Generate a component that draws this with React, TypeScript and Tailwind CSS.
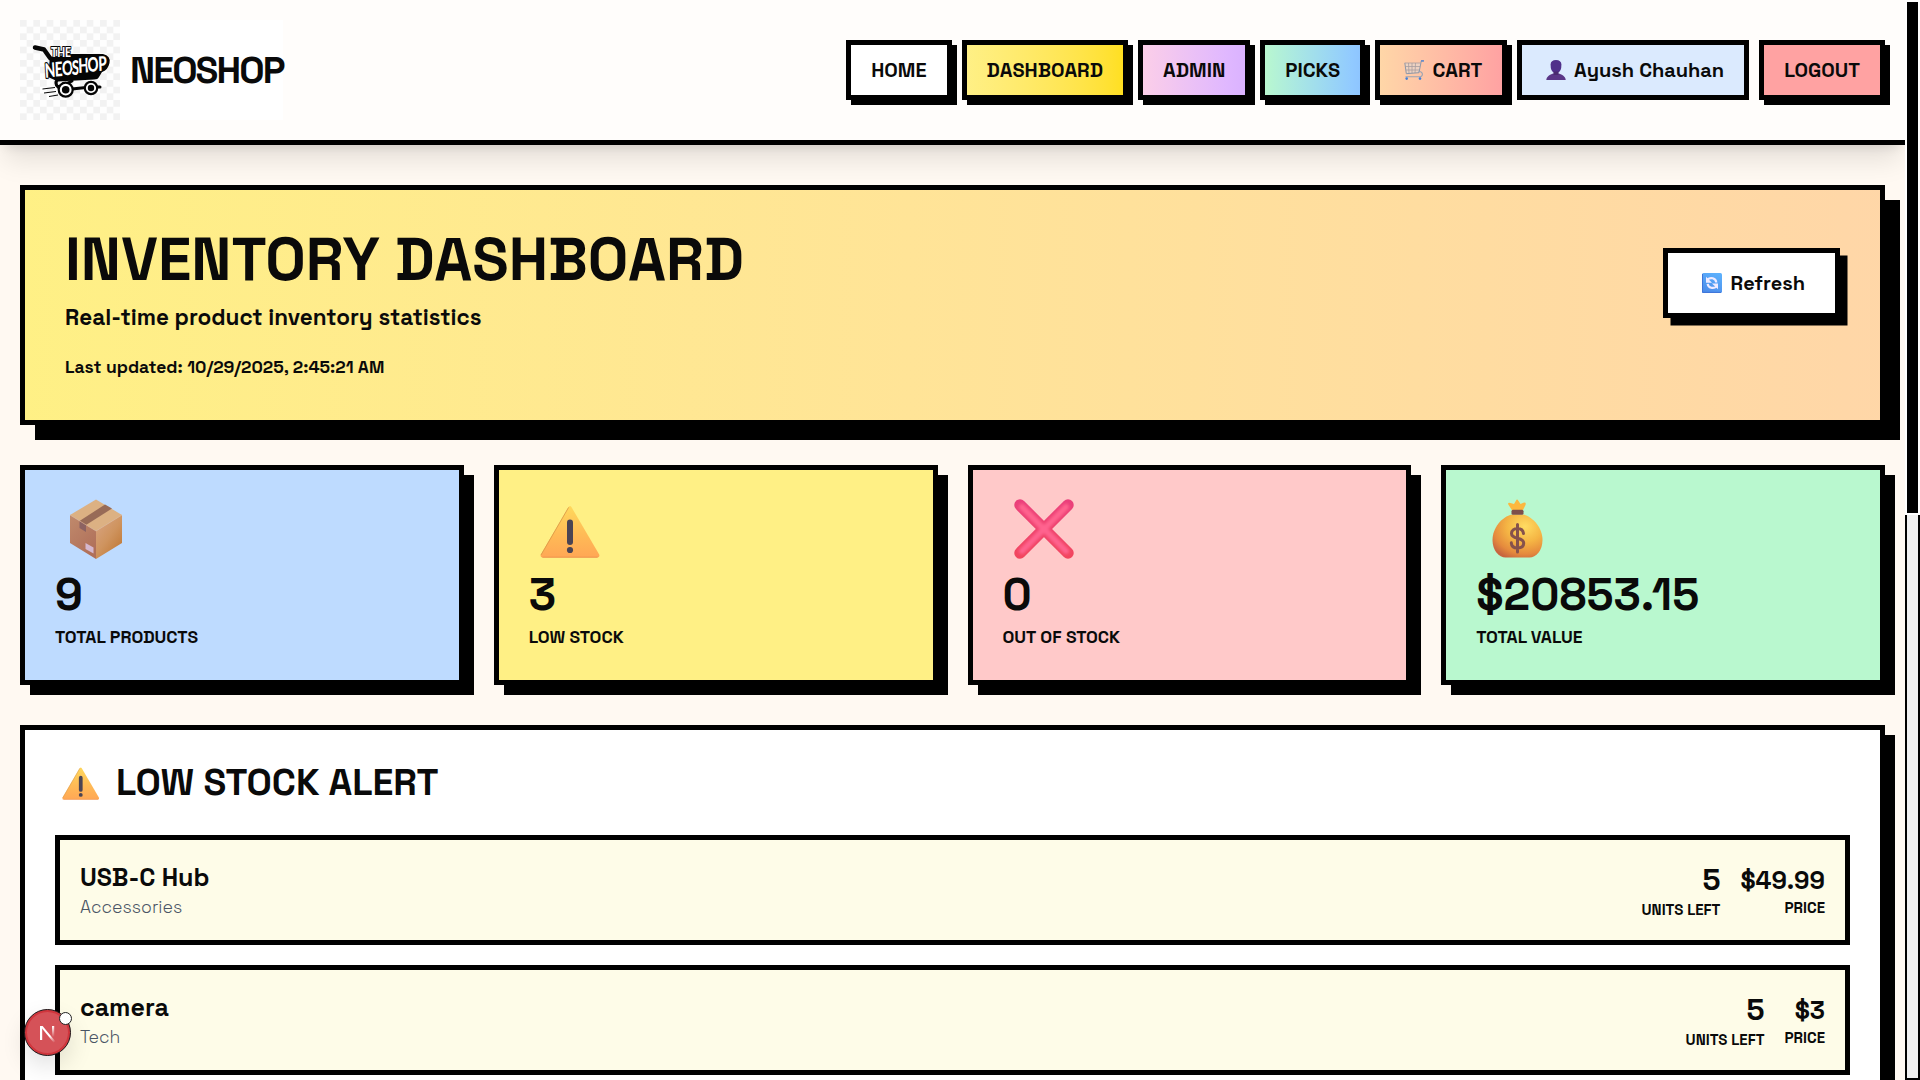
import type { ReactNode } from "react";

type IconProps = { className?: string };

function BoxIcon({ className }: IconProps) {
  return (
    <svg viewBox="0 0 60 60" className={className}>
      <defs>
        <linearGradient id="boxL" x1="0" y1="0" x2="0.6" y2="1">
          <stop offset="0" stopColor="#c08a6c" />
          <stop offset="1" stopColor="#b0705a" />
        </linearGradient>
        <linearGradient id="boxR" x1="0.1" y1="0" x2="0.9" y2="1">
          <stop offset="0" stopColor="#d8a483" />
          <stop offset="0.5" stopColor="#cf945f" />
          <stop offset="1" stopColor="#bd7430" />
        </linearGradient>
      </defs>
      <path d="M30 0.5 56 16 30 32 4 16Z" fill="#dcb183" />
      <path d="M4 16 30 32V60L4 44Z" fill="url(#boxL)" />
      <path d="M56 16 30 32V60L56 44Z" fill="url(#boxR)" />
      <path d="M39 5.5 46 9.5 20 26 13.5 22Z" fill="#986b57" />
      <path d="M13.5 22 20 26V33L13.5 29Z" fill="#8c6262" />
      <path d="M19.5 44 27.5 48.5V54.5L19.5 50Z" fill="#d5b8cf" />
      <path d="M4 16 30 32 56 16" fill="none" stroke="#e0b795" strokeWidth="0.6" />
    </svg>
  );
}

function WarningIcon({ className }: IconProps) {
  return (
    <svg viewBox="0 0 60 60" className={className}>
      <defs>
        <linearGradient id="warn" x1="0" y1="0" x2="0" y2="1">
          <stop offset="0" stopColor="#ffd85c" />
          <stop offset="0.55" stopColor="#ffbb56" />
          <stop offset="1" stopColor="#ffa755" />
        </linearGradient>
      </defs>
      <path
        d="M28.6 8Q30 6 31.4 8L59.2 55.500Q60 58.500 57.6 58.500H2.4Q0 58.500 0.8 55.500Z"
        fill="url(#warn)"
      />
      <path d="M1 56 28.6 8.4" stroke="#dc9c4a" strokeWidth="0.9" fill="none" />
      <path d="M2.4 58.2H57.6" stroke="#ec914c" strokeWidth="0.9" fill="none" />
      <rect x="27" y="20.500" width="6" height="25.500" rx="3" fill="#4b4453" />
      <circle cx="30" cy="51" r="3.100" fill="#4b4453" />
    </svg>
  );
}

function CrossIcon({ className }: IconProps) {
  return (
    <svg viewBox="0 0 60 60" className={className}>
      <defs>
        <linearGradient id="crossEdge" gradientUnits="userSpaceOnUse" x1="0" y1="0" x2="0" y2="60">
          <stop offset="0" stopColor="#ea3f7c" />
          <stop offset="1" stopColor="#f2455c" />
        </linearGradient>
        <filter id="crossSoft" x="-20%" y="-20%" width="140%" height="140%">
          <feGaussianBlur stdDeviation="1.8" />
        </filter>
      </defs>
      <path d="M6 6 54 54M54 6 6 54" stroke="url(#crossEdge)" strokeWidth="11.500" strokeLinecap="round" />
      <path d="M8 8 52 52M52 8 8 52" stroke="#ff638f" strokeWidth="6" strokeLinecap="round" filter="url(#crossSoft)" />
    </svg>
  );
}

function MoneyIcon({ className }: IconProps) {
  return (
    <svg viewBox="0 0 60 60" className={className}>
      <defs>
        <radialGradient id="bag" cx="0.65" cy="0.28" r="0.8">
          <stop offset="0" stopColor="#ffdc62" />
          <stop offset="0.45" stopColor="#f5b544" />
          <stop offset="0.8" stopColor="#e58a3d" />
          <stop offset="1" stopColor="#c8663f" />
        </radialGradient>
      </defs>
      <path d="M25.500 12 21.300 5.500Q20.500 3 23.500 4L27 5 29.500 0.800Q30 0 30.700 0.800L33.500 5 37 3.500Q39.500 3.200 38.500 6L35.500 12Z" fill="#fcb83f" />
      <path d="M25 15.500H36C46 17.500 55.500 29 55.500 41C55.500 51.500 49 58.500 42.500 58.500H18.500C12 58.500 5.500 51.500 5.500 41C5.500 29 15 17.500 25 15.500Z" fill="url(#bag)" />
      <rect x="24.500" y="10.800" width="12" height="5" rx="1.500" fill="#7d4f4b" />
      <path d="M36.500 34.500C36 31 33.500 29.500 30.500 29.500C27 29.500 24.500 31.500 24.500 34.500C24.500 41 36.700 37.500 36.700 44C36.700 47.500 34 49 30.500 49C27 49 24.500 47.500 24.300 43.800M30.500 25.500V53" fill="none" stroke="#86524c" strokeWidth="3" strokeLinecap="round" />
    </svg>
  );
}

function CartIcon({ className }: IconProps) {
  return (
    <svg viewBox="0 0 20 20" className={className}>
      <path d="M1 3H16.500L15 12.500 2.500 13.500Z" fill="#e6d5cd" fillOpacity="0.7" />
      <path d="M1 3H16.500M1.500 6.500H16M2 10H15.500M4.500 3 5 13.300M8 3V13.200M11.500 3 11 13" stroke="#a89d9f" strokeWidth="0.8" fill="none" />
      <path d="M19.500 0.900H17.300L15 12.700 2.300 13.700 0.800 2.800" stroke="#8d97a8" strokeWidth="1" fill="none" />
      <path d="M14.500 11.500C19 11 19.500 16 16.500 16.700H1.500" stroke="#9aa3b4" strokeWidth="1.100" fill="none" />
      <path d="M17 0.900H20" stroke="#5d88cf" strokeWidth="1.500" />
      <circle cx="2.700" cy="18.600" r="1.300" fill="#3f7fdc" />
      <circle cx="16" cy="18.600" r="1.300" fill="#3f7fdc" />
    </svg>
  );
}

function UserIcon({ className }: IconProps) {
  return (
    <svg viewBox="0 0 20 20" className={className}>
      <path d="M10 0C13.300 0 15.400 1.500 15.400 4.500L15.200 8C14.800 11 12.500 13 10 13C7.500 13 5.200 11 4.800 8L4.600 4.500C4.600 1.500 6.700 0 10 0Z" fill="#50308a" />
      <path d="M0.300 20C0.300 16.500 5 14.200 7.500 13.600H12.500C15 14.200 19.700 16.500 19.700 20Z" fill="#5a3687" />
      <path d="M7.500 11.500H12.500V15H7.500Z" fill="#4a2b70" />
    </svg>
  );
}

function RefreshIcon({ className }: IconProps) {
  return (
    <svg viewBox="0 0 20 20" className={className}>
      <defs>
        <linearGradient id="ref" x1="0.7" y1="0" x2="0.3" y2="1">
          <stop offset="0" stopColor="#5cb0fc" />
          <stop offset="1" stopColor="#4c8cea" />
        </linearGradient>
      </defs>
      <rect width="20" height="20" rx="1.600" fill="url(#ref)" />
      <path d="M0.500 1V19.400H19" stroke="#3f74d8" strokeWidth="1" fill="none" />
      <path d="M5.500 6.500C8.500 3.800 13.800 5 14.300 9.500M14.500 13.500C11.500 16.200 6.200 15 5.700 10.800" fill="none" stroke="#f0ebff" strokeWidth="2.200" />
      <path d="M4 3.800V9.800H10Z" fill="#f0ebff" />
      <path d="M16 16.200V10.400H10Z" fill="#f0ebff" />
    </svg>
  );
}

function Logo() {
  return (
    <svg viewBox="0 0 100 100" className="size-[100px] shrink-0">
      <defs>
        <pattern id="check" width="13.34" height="13.34" patternUnits="userSpaceOnUse">
          <rect width="13.34" height="13.34" fill="#fefefe" />
          <rect width="6.67" height="6.67" fill="#f2f2f2" />
          <rect x="6.67" y="6.67" width="6.67" height="6.67" fill="#f2f2f2" />
        </pattern>
      </defs>
      <rect width="100" height="100" fill="url(#check)" />
      <path d="M15 27.500 24 29.500 30 38" fill="none" stroke="#050505" strokeWidth="4.500" strokeLinecap="round" strokeLinejoin="round" />
      <path d="M30 37 52 34H83Q91 36 89.500 43Q88 50 82 52L79 57Q78 59.500 74 59.500L38 61.500 28 57Z" fill="#050505" />
      <path d="M38 59Q34 63 38 67L46 64 52 61M52 69 66 67.500M76 67H80" fill="none" stroke="#050505" strokeWidth="3" strokeLinecap="round" />
      <circle cx="45.700" cy="69.700" r="7" fill="#fff" stroke="#050505" strokeWidth="2.200" />
      <circle cx="45.700" cy="69.700" r="3.800" fill="#050505" />
      <circle cx="71" cy="68" r="6.200" fill="#fff" stroke="#050505" strokeWidth="2.200" />
      <circle cx="71" cy="68" r="3.200" fill="#050505" />
      <path d="M22.500 69 35 67.500M24 73 36 71.500M29 76.500 38 75" stroke="#050505" strokeWidth="1" />
      <text x="31" y="37" textLength="20" lengthAdjust="spacingAndGlyphs" className="[font-family:Lato,sans-serif] text-[14px] font-black" fill="#fff" stroke="#050505" strokeWidth="2.200" strokeLinejoin="round" paintOrder="stroke">
        THE
      </text>
      <text
        transform="scale(0.68 1)"
        x="37 51.5 62 76 86 99.5 115.500"
        y="58 56.500 55.500 55 53 52 51"
        rotate="-5 -3 -3 0 -3 -3 -3"
        className="[font-family:Lato,sans-serif] text-[20px] font-black"
        fill="#fff"
        stroke="#050505"
        strokeWidth="2.400"
        strokeLinejoin="round"
        paintOrder="stroke"
      >
        NEOSHOP
      </text>
    </svg>
  );
}

function NavButton({ children, tone }: { children: ReactNode; tone: string }) {
  return (
    <button className={`flex h-[60px] items-center whitespace-nowrap border-5 border-black px-5 text-[20px] leading-[30px] font-bold ${tone}`}>
      {children}
    </button>
  );
}

function StatCard({ icon, value, label, tone }: { icon: ReactNode; value: string; label: string; tone: string }) {
  return (
    <div className={`h-[220px] border-5 border-black p-[30px] shadow-[10px_10px_0_#000] ${tone}`}>
      <div className="-mt-px mb-[11px] flex h-[60px] w-[82px] justify-center">{icon}</div>
      <div className="text-[45px] leading-[50px] font-bold">{value}</div>
      <div className="mt-[5px] text-[17.5px] leading-[25px] font-semibold">{label}</div>
    </div>
  );
}

function StockRow({ name, category, units, price }: { name: string; category: string; units: string; price: string }) {
  return (
    <div className="flex h-[110px] items-center justify-between border-5 border-black bg-yellow-50 px-5">
      <div>
        <div className="text-[25px] leading-[35px] font-bold">{name}</div>
        <div className="text-[17.5px] leading-[25px] font-[350] text-gray-600">{category}</div>
      </div>
      <div className="flex items-center gap-5 text-right font-bold">
        <div>
          <div className="text-[30px] leading-[40px]">{units}</div>
          <div className="text-[15px] leading-[20px] font-semibold">UNITS LEFT</div>
        </div>
        <div>
          <div className="text-[25px] leading-[35px]">{price}</div>
          <div className="text-[15px] leading-[20px] font-semibold">PRICE</div>
        </div>
      </div>
    </div>
  );
}

function DevBadge() {
  return (
    <div className="absolute top-[1009px] left-[24px] size-[47px] rounded-full border border-[#1c1416] bg-[#d55258] shadow-[inset_0_0_0_2px_#d0353c,0_10px_25px_rgba(0,0,0,0.12)]">
      <svg viewBox="0 0 47 47" className="absolute -top-px -left-px size-[47px]">
        <defs>
          <linearGradient id="nDiag" gradientUnits="userSpaceOnUse" x1="24" y1="24" x2="31" y2="33">
            <stop offset="0.3" stopColor="#fff" />
            <stop offset="1" stopColor="#fff" stopOpacity="0" />
          </linearGradient>
          <linearGradient id="nBar" x1="0" y1="0" x2="0" y2="1">
            <stop offset="0" stopColor="#fff" />
            <stop offset="1" stopColor="#fff" stopOpacity="0" />
          </linearGradient>
        </defs>
        <rect x="16" y="17" width="2.200" height="14" fill="#fff" />
        <path d="M16 17H18.600L31.500 32.500 30 34Z" fill="url(#nDiag)" />
        <rect x="28" y="17" width="2.200" height="11" fill="url(#nBar)" />
      </svg>
      <div className="absolute top-[2px] left-[33.5px] size-[13px] rounded-full border-[1.5px] border-[#222] bg-white" />
    </div>
  );
}

export default function App() {
  return (
    <div className="relative flex h-[1080px] w-[1920px] overflow-hidden bg-[#fff9f2] text-[#0a0a0a] [font-family:'Space_Grotesk',Inter,sans-serif]">
      <div className="flex w-[1905px] shrink-0 flex-col">
        <header className="flex h-[145px] shrink-0 items-center justify-between border-b-5 border-black bg-[#fffdfb] px-5 shadow-[0_20px_25px_-5px_rgba(0,0,0,0.1),0_8px_10px_-6px_rgba(0,0,0,0.1)]">
          <a className="flex items-center gap-2.5 bg-white">
            <Logo />
            <span className="text-[37.5px] leading-[45px] font-bold tracking-[-0.05em]">NEOSHOP</span>
          </a>
          <nav className="flex items-center gap-2.5">
            <NavButton tone="bg-white shadow-[5px_5px_0_#000]">HOME</NavButton>
            <NavButton tone="bg-linear-to-r from-yellow-200 to-yellow-300 shadow-[5px_5px_0_#000]">DASHBOARD</NavButton>
            <NavButton tone="bg-linear-to-r from-pink-200 to-purple-300 shadow-[5px_5px_0_#000]">ADMIN</NavButton>
            <NavButton tone="bg-linear-to-r from-green-200 to-blue-300 shadow-[5px_5px_0_#000]">PICKS</NavButton>
            <NavButton tone="bg-linear-to-r from-orange-200 to-red-300 shadow-[5px_5px_0_#000]">
              <CartIcon className="mr-[8.5px] ml-[4px] size-5" />
              CART
            </NavButton>
            <NavButton tone="bg-blue-100">
              <UserIcon className="mr-[7.8px] ml-[4px] size-5" />
              Ayush Chauhan
            </NavButton>
            <NavButton tone="bg-red-300 shadow-[5px_5px_0_#000]">LOGOUT</NavButton>
          </nav>
        </header>

        <main className="px-5 pt-10">
          <section className="flex h-[240px] items-start justify-between border-5 border-black bg-linear-to-r from-yellow-200 to-orange-200 p-10 shadow-[15px_15px_0_#000]">
            <div>
              <h1 className="text-[60px] leading-[60px] font-bold">INVENTORY DASHBOARD</h1>
              <p className="mt-2.5 text-[22.5px] leading-[35px] font-semibold">Real-time product inventory statistics</p>
              <p className="mt-5 text-[17.5px] leading-[25px] font-semibold">Last updated: 10/29/2025, 2:45:21 AM</p>
            </div>
            <button className="mt-[18px] flex h-[70px] w-[177px] items-center border-5 border-black bg-white pl-[34px] text-[20px] leading-[30px] font-bold shadow-[7.5px_7.5px_0_#000]">
              <RefreshIcon className="mr-[8.5px] size-5" />
              Refresh
            </button>
          </section>

          <section className="mt-10 grid grid-cols-4 gap-[30px]">
            <StatCard tone="bg-blue-200" icon={<BoxIcon className="size-[60px]" />} value="9" label="TOTAL PRODUCTS" />
            <StatCard tone="bg-yellow-200" icon={<WarningIcon className="size-[60px]" />} value="3" label="LOW STOCK" />
            <StatCard tone="bg-red-200" icon={<CrossIcon className="size-[60px]" />} value="0" label="OUT OF STOCK" />
            <StatCard tone="bg-green-200" icon={<MoneyIcon className="size-[60px]" />} value="$20853.15" label="TOTAL VALUE" />
          </section>

          <section className="mt-10 h-[560px] border-5 border-black bg-white p-[30px] shadow-[10px_10px_0_#000]">
            <h2 className="mb-[30px] flex h-[45px] items-center text-[37.5px] leading-[45px] font-bold">
              <WarningIcon className="mr-[16.5px] mb-[2px] ml-[7px] size-[37.5px]" />
              LOW STOCK ALERT
            </h2>
            <div className="flex flex-col gap-5">
              <StockRow name="USB-C Hub" category="Accessories" units="5" price="$49.99" />
              <StockRow name="camera" category="Tech" units="5" price="$3" />
            </div>
          </section>
        </main>
      </div>

      <div className="flex w-[15px] shrink-0 flex-col bg-white">
        <div className="mx-[2px] mt-[2px] h-[511px] bg-black" />
        <div className="mt-[2px] h-[565px] border-2 border-t-0 border-black bg-[#f0f0f0]" />
      </div>

      <DevBadge />
    </div>
  );
}
